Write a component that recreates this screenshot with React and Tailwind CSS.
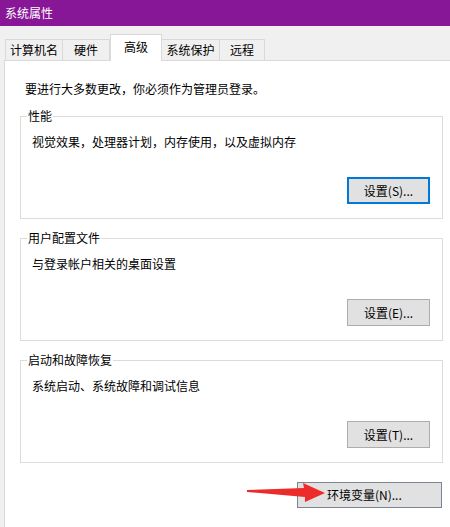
const tabs = [
  { label: '计算机名', w: 'w-[58px]' },
  { label: '硬件', w: 'w-[47px]' },
  { label: '高级', w: 'w-[52px]', active: true },
  { label: '系统保护', w: 'w-[58px]' },
  { label: '远程', w: 'w-[45px]' }
];

const groups = [
  { title: '性能', text: '视觉效果，处理器计划，内存使用，以及虚拟内存', button: '设置(S)...', focused: true },
  { title: '用户配置文件', text: '与登录帐户相关的桌面设置', button: '设置(E)...' },
  { title: '启动和故障恢复', text: '系统启动、系统故障和调试信息', button: '设置(T)...' }
];

function GroupBox({ title, text, button, focused }) {
  return (
    <div className="relative flex h-[103px] flex-col border border-[#dcdcdc] pl-[11px] pr-[12px] pt-[17px]">
      <span className="absolute -top-[9px] left-[6px] bg-white px-[1px] leading-[16px]">{title}</span>
      <p className="leading-[16px]">{text}</p>
      <div className="mt-auto mb-[14px] flex justify-end">
        <button
          className={
            focused
              ? 'h-[27px] w-[83px] border-2 border-[#0078d7] bg-[#e1e1e1] text-[12px] leading-none'
              : 'h-[27px] w-[83px] border border-[#adadad] bg-[#e1e1e1] text-[12px] leading-none'
          }
        >
          {button}
        </button>
      </div>
    </div>
  );
}

export default function App() {
  return (
    <div
      className="relative flex h-[527px] w-[450px] flex-col overflow-hidden bg-[#f0f0f0] text-[12px] text-black"
      style={{ fontFamily: '"Microsoft YaHei", "Noto Sans CJK SC", sans-serif' }}
    >
      <div className="flex h-[26px] items-center bg-[#881798] pl-[5px] text-white">系统属性</div>

      <div className="flex h-[34px] items-end pl-[5px]">
        {tabs.map((t) =>
          t.active ? (
            <div
              key={t.label}
              className={`${t.w} relative z-10 -mb-px flex h-[27px] items-start justify-center border border-b-0 border-[#d9d9d9] bg-white pt-[3px]`}
            >
              {t.label}
            </div>
          ) : (
            <div
              key={t.label}
              className={`${t.w} flex h-[21px] items-center justify-center border border-b-0 border-l-0 first:border-l border-[#d9d9d9] bg-[#f0f0f0]`}
            >
              {t.label}
            </div>
          )
        )}
      </div>

      <div className="ml-[4px] flex flex-1 flex-col border-l border-t border-[#d9d9d9] bg-white pl-[15px] pr-[7px] pt-[20px]">
        <p className="pl-[5px] leading-[16px]">要进行大多数更改，你必须作为管理员登录。</p>
        <div className="mt-[19px] flex flex-col gap-[19px]">
          {groups.map((g) => (
            <GroupBox key={g.title} {...g} />
          ))}
        </div>
        <div className="mt-[19px] flex justify-end pr-[1px]">
          <button className="h-[26px] w-[145px] border border-[#7a8494] bg-[#e1e1e1] text-left pl-[29px] text-[12px]">
            环境变量(N)...
          </button>
        </div>
      </div>

      <svg className="absolute left-0 top-0" width="450" height="527" viewBox="0 0 450 527">
        <polygon
          points="247,490 304,488 303,483 325,493 305,502 305,497 247,492"
          fill="#ee2b2b"
        />
      </svg>
    </div>
  );
}
